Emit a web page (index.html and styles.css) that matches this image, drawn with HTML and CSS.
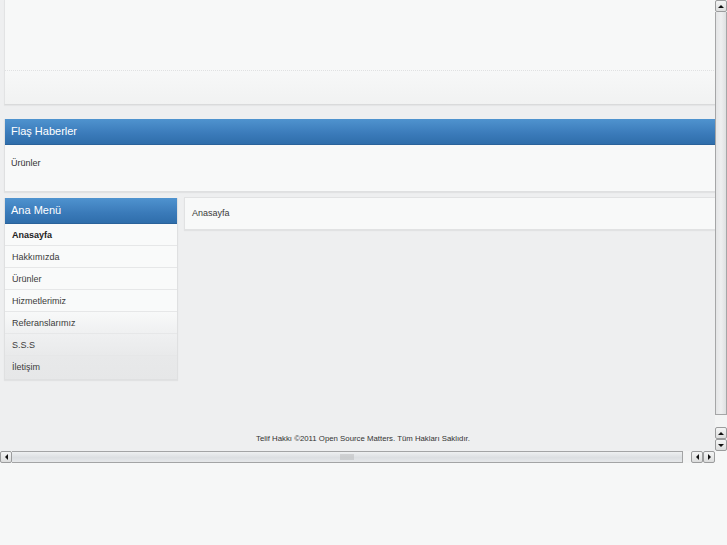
FILE: index.html
```html
<!DOCTYPE html>
<html lang="tr">
<head>
<meta charset="utf-8">
<title>Anasayfa</title>
<link rel="stylesheet" href="styles.css">
</head>
<body>
<div class="frame">
  <div class="viewport">
    <div class="page">
      <div class="top-box">
        <div class="top-main"></div>
        <div class="top-foot"></div>
      </div>
      <div class="panel flash">
        <div class="panel-head">Flaş Haberler</div>
        <div class="flash-body">Ürünler</div>
      </div>
      <div class="columns">
        <div class="panel menu">
          <div class="panel-head">Ana Menü</div>
          <ul class="menu-list">
            <li class="item active">Anasayfa</li>
            <li class="item">Hakkımızda</li>
            <li class="item">Ürünler</li>
            <li class="item">Hizmetlerimiz</li>
            <li class="item tone1">Referanslarımız</li>
            <li class="item tone2">S.S.S</li>
            <li class="item tone3">İletişim</li>
          </ul>
        </div>
        <div class="content">
          <div class="crumb">Anasayfa</div>
        </div>
      </div>
      <div class="footer">Telif Hakkı ©2011 Open Source Matters. Tüm Hakları Saklıdır.</div>
    </div>
  </div>
  <div class="vbar">
    <div class="btn"><span class="tri up"></span></div>
    <div class="vthumb"></div>
    <div class="vgap"></div>
    <div class="btn"><span class="tri up"></span></div>
    <div class="btn"><span class="tri down"></span></div>
  </div>
  <div class="hbar">
    <div class="btn"><span class="tri left"></span></div>
    <div class="hthumb"><span class="grip"></span></div>
    <div class="hgap"></div>
    <div class="btn"><span class="tri left"></span></div>
    <div class="btn"><span class="tri right"></span></div>
  </div>
  <div class="corner"></div>
</div>
</body>
</html>
```

FILE: styles.css
```css
html, body {
  margin: 0;
  padding: 0;
  background: #f6f7f7;
  font-family: "Liberation Sans", Arial, sans-serif;
  color: #333;
}

.frame {
  display: grid;
  grid-template-columns: 715px 12px;
  grid-template-rows: 451px 12px;
  width: 727px;
}

.viewport {
  overflow: hidden;
  background: #eeeff0;
}

.page {
  width: 760px;
  padding: 0 0 0 4px;
}

.top-box {
  height: 104px;
  background: #f7f8f8;
  border-left: 1px solid #e2e3e4;
  border-bottom: 1px solid #d9dadb;
  box-shadow: 0 1px 1px rgba(0,0,0,0.04);
  display: flex;
  flex-direction: column;
}

.top-main {
  height: 70px;
  border-bottom: 1px dotted #e0e1e2;
}

.top-foot {
  flex: 1;
  background: linear-gradient(#f7f8f8, #f1f2f2);
}

.panel {
  background: #f8f9f9;
  border: 1px solid #dfe0e1;
  border-top: 0;
  box-shadow: 0 1px 1px rgba(0,0,0,0.05);
}

.panel-head {
  height: 26px;
  line-height: 24px;
  padding-left: 6px;
  font-size: 11px;
  color: #ffffff;
  background: linear-gradient(#4f93cf, #3a7ab9 60%, #2f6eab);
  border-bottom: 1px solid #2a629a;
  box-sizing: border-box;
}

.flash {
  margin-top: 14px;
}

.flash-body {
  height: 46px;
  box-sizing: border-box;
  padding: 13px 0 0 6px;
  font-size: 9px;
  color: #333;
}

.columns {
  display: flex;
  align-items: flex-start;
  gap: 6px;
  margin-top: 5px;
}

.menu {
  width: 174px;
  box-sizing: border-box;
  margin-top: 1px;
}

.menu-list {
  list-style: none;
  margin: 0;
  padding: 0;
}

.item {
  height: 22px;
  line-height: 23px;
  box-sizing: border-box;
  padding-left: 7px;
  font-size: 9px;
  color: #3b3b3b;
  background: #f9fafa;
  border-bottom: 1px solid #e6e7e8;
  overflow: hidden;
}

.item:last-child {
  border-bottom: 0;
  height: 23px;
}

.item.active {
  font-weight: bold;
  color: #222;
}

.item.tone1 { background: linear-gradient(#f8f9f9, #eff0f1); }
.item.tone2 { background: linear-gradient(#eff0f1, #e9eaeb); }
.item.tone3 { background: linear-gradient(#e8e9ea, #e6e7e8); }

.content {
  flex: 1;
  background: #f8f9f9;
  border: 1px solid #e1e2e3;
  box-shadow: 0 1px 1px rgba(0,0,0,0.05);
  height: 33px;
  box-sizing: border-box;
}

.crumb {
  padding: 10px 0 0 7px;
  font-size: 9px;
  color: #3a3a3a;
}

.footer {
  width: 718px;
  text-align: center;
  font-size: 7.8px;
  color: #333;
  margin-top: 54px;
}

/* fake scrollbars */
.vbar {
  display: flex;
  flex-direction: column;
  background: #f3f4f4;
}

.hbar {
  display: flex;
  background: #f3f4f4;
}

.corner {
  background: #f6f7f7;
}

.btn {
  width: 12px;
  height: 12px;
  box-sizing: border-box;
  border: 1px solid #9b9c9d;
  border-radius: 2px;
  background: linear-gradient(#f4f5f5, #dcdddd);
  display: flex;
  align-items: center;
  justify-content: center;
  flex: none;
}

.tri {
  width: 0;
  height: 0;
  border-style: solid;
}

.tri.up { border-width: 0 3px 3px 3px; border-color: transparent transparent #111 transparent; }
.tri.down { border-width: 3px 3px 0 3px; border-color: #111 transparent transparent transparent; }
.tri.left { border-width: 3px 3px 3px 0; border-color: transparent #111 transparent transparent; }
.tri.right { border-width: 3px 0 3px 3px; border-color: transparent transparent transparent #111; }

.vthumb {
  height: 403px;
  box-sizing: border-box;
  border: 1px solid #a5a6a7;
  border-top: 0;
  background: linear-gradient(90deg, #e4e5e6, #eeeff0 50%, #dfe0e1);
  flex: none;
}

.vgap {
  height: 12px;
  flex: none;
}

.hthumb {
  width: 671px;
  box-sizing: border-box;
  border: 1px solid #a3a4a5;
  border-left: 0;
  background: linear-gradient(#eef0f1, #dcdfe2 55%, #e6e8ea);
  display: flex;
  align-items: center;
  justify-content: center;
  flex: none;
}

.grip {
  width: 14px;
  height: 6px;
  background-image: radial-gradient(circle, #b5b6b7 0.6px, transparent 0.8px);
  background-size: 2px 2px;
}

.hgap {
  width: 8px;
  flex: none;
}
```
